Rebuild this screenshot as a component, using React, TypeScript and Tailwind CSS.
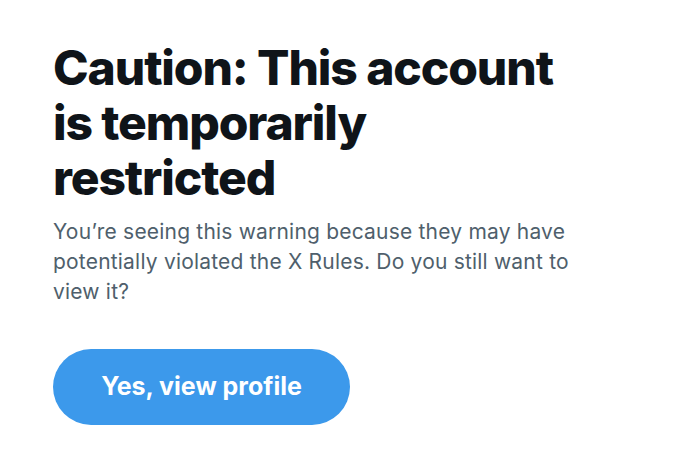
export default function App() {
  return (
    <div className="min-h-screen bg-white px-[53px] pt-[40px] font-['Inter',sans-serif]">
      <h1 className="w-[520px] text-[48px] font-extrabold leading-[55px] tracking-[-1.1px] text-[#0f1419]">
        Caution: This account is temporarily restricted
      </h1>
      <p className="mt-[12px] w-[540px] text-[21px] leading-[30px] tracking-[0.2px] text-[#4f5f6c]">
        You’re seeing this warning because they may have potentially violated the X Rules. Do you still want to view it?
      </p>
      <button className="mt-[42px] flex h-[76px] w-[297px] items-center justify-center rounded-full bg-[#3c99eb] text-[25px] font-bold text-white">
        Yes, view profile
      </button>
    </div>
  );
}
